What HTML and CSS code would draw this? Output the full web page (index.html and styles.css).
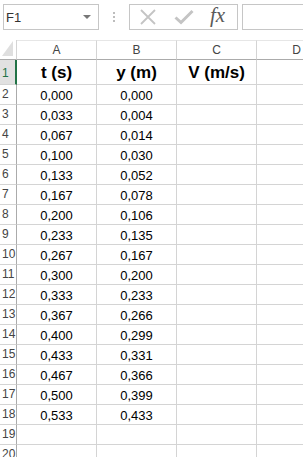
FILE: index.html
```html
<!DOCTYPE html>
<html>
<head>
<meta charset="utf-8">
<link rel="stylesheet" href="styles.css">
</head>
<body>
<div class="toolbar">
  <div class="namebox">
    <span class="ref">F1</span>
    <span class="caret"></span>
  </div>
  <div class="grip"><i></i><i></i><i></i></div>
  <div class="buttons">
    <svg class="ico" width="18" height="16" viewBox="0 0 18 16"><path d="M2 1 L16 15 M16 1 L2 15" stroke="#c4c4c4" stroke-width="1.8" fill="none"/></svg>
    <svg class="ico check" width="20" height="16" viewBox="0 0 20 16"><path d="M1.5 8.5 L7 13.5 L18.5 2" stroke="#c4c4c4" stroke-width="3" fill="none"/></svg>
    <span class="fx">fx</span>
  </div>
  <div class="input"></div>
</div>
<div class="sheet">
<div class="grid">
  <div class="corner"><span class="tri"></span></div>
  <div class="ch">A</div><div class="ch">B</div><div class="ch">C</div><div class="ch">D</div>

  <div class="rh sel">1</div><div class="c h">t (s)</div><div class="c h">y (m)</div><div class="c h">V (m/s)</div><div class="c"></div>
  <div class="rh">2</div><div class="c">0,000</div><div class="c">0,000</div><div class="c"></div><div class="c"></div>
  <div class="rh">3</div><div class="c">0,033</div><div class="c">0,004</div><div class="c"></div><div class="c"></div>
  <div class="rh">4</div><div class="c">0,067</div><div class="c">0,014</div><div class="c"></div><div class="c"></div>
  <div class="rh">5</div><div class="c">0,100</div><div class="c">0,030</div><div class="c"></div><div class="c"></div>
  <div class="rh">6</div><div class="c">0,133</div><div class="c">0,052</div><div class="c"></div><div class="c"></div>
  <div class="rh">7</div><div class="c">0,167</div><div class="c">0,078</div><div class="c"></div><div class="c"></div>
  <div class="rh">8</div><div class="c">0,200</div><div class="c">0,106</div><div class="c"></div><div class="c"></div>
  <div class="rh">9</div><div class="c">0,233</div><div class="c">0,135</div><div class="c"></div><div class="c"></div>
  <div class="rh">10</div><div class="c">0,267</div><div class="c">0,167</div><div class="c"></div><div class="c"></div>
  <div class="rh">11</div><div class="c">0,300</div><div class="c">0,200</div><div class="c"></div><div class="c"></div>
  <div class="rh">12</div><div class="c">0,333</div><div class="c">0,233</div><div class="c"></div><div class="c"></div>
  <div class="rh">13</div><div class="c">0,367</div><div class="c">0,266</div><div class="c"></div><div class="c"></div>
  <div class="rh">14</div><div class="c">0,400</div><div class="c">0,299</div><div class="c"></div><div class="c"></div>
  <div class="rh">15</div><div class="c">0,433</div><div class="c">0,331</div><div class="c"></div><div class="c"></div>
  <div class="rh">16</div><div class="c">0,467</div><div class="c">0,366</div><div class="c"></div><div class="c"></div>
  <div class="rh">17</div><div class="c">0,500</div><div class="c">0,399</div><div class="c"></div><div class="c"></div>
  <div class="rh">18</div><div class="c">0,533</div><div class="c">0,433</div><div class="c"></div><div class="c"></div>
  <div class="rh">19</div><div class="c"></div><div class="c"></div><div class="c"></div><div class="c"></div>
  <div class="rh">20</div><div class="c"></div><div class="c"></div><div class="c"></div><div class="c"></div>
</div>
</div>
</body>
</html>
```
FILE: styles.css
```css
html, body {
  margin: 0;
  padding: 0;
  background: #fff;
  overflow: hidden;
  width: 303px;
  height: 457px;
}
body {
  font-family: "Liberation Sans", Arial, sans-serif;
  color: #000;
}
.toolbar {
  height: 40px;
  display: flex;
  align-items: flex-start;
  padding-top: 4px;
  box-sizing: border-box;
  overflow: hidden;
}
.namebox {
  margin-left: 3px;
  width: 96px;
  height: 26px;
  box-sizing: border-box;
  border: 1px solid #c6c6c6;
  display: flex;
  align-items: center;
  justify-content: space-between;
  padding: 0 7px 0 2px;
  flex: none;
}
.ref {
  font-size: 13px;
  color: #333;
}
.caret {
  width: 0;
  height: 0;
  border-left: 4px solid transparent;
  border-right: 4px solid transparent;
  border-top: 4px solid #777;
}
.grip {
  width: 2px;
  margin-left: 14px;
  margin-top: 8px;
  display: flex;
  flex-direction: column;
  gap: 2px;
  flex: none;
}
.grip i {
  display: block;
  width: 2px;
  height: 2px;
  background: #bdbdbd;
}
.buttons {
  margin-left: 14px;
  width: 109px;
  height: 26px;
  box-sizing: border-box;
  border: 1px solid #c6c6c6;
  display: flex;
  align-items: center;
  padding-left: 9px;
  flex: none;
}
.ico { display: block; }
.check { margin-left: 17px; }
.fx {
  margin-left: 16px;
  font-family: "Liberation Serif", "Times New Roman", serif;
  font-style: italic;
  font-size: 21px;
  color: #5a5a5a;
  line-height: 1;
  margin-top: -3px;
}
.input {
  margin-left: 4px;
  flex: 1;
  height: 26px;
  box-sizing: border-box;
  border: 1px solid #c6c6c6;
  border-right: none;
}
.sheet {
  width: 303px;
  height: 417px;
  overflow: hidden;
}
.grid {
  display: grid;
  width: 337px;
  grid-template-columns: 17px 80px 80px 80px 80px;
  grid-template-rows: 20px 25px repeat(19, 20px);
}
.grid > div {
  box-sizing: border-box;
  border-right: 1px solid #d4d4d4;
  border-bottom: 1px solid #d4d4d4;
}
.corner {
  position: relative;
  border-bottom-color: #ababab !important;
}
.tri {
  position: absolute;
  right: 3px;
  bottom: 3px;
  width: 0;
  height: 0;
  border-left: 11px solid transparent;
  border-bottom: 15px solid #dfdfdf;
}
.grid > .ch {
  border-top: 1px solid #e6e6e6;
  border-bottom-color: #ababab;
  font-size: 12px;
  color: #444;
  text-align: center;
  line-height: 19px;
}
.grid > .rh {
  border-right-color: #ababab;
  font-size: 12px;
  color: #444;
  padding-left: 2px;
  line-height: 21px;
  display: flex;
  align-items: center;
}
.grid > .rh.sel {
  background: #e1e1e1;
  color: #217346;
  border-right: 2px solid #217346;
  padding-top: 2px;
}
.c {
  font-size: 13px;
  text-align: center;
  line-height: 21px;
}
.c.h {
  font-weight: bold;
  font-size: 17px;
  line-height: 26px;
}
```
